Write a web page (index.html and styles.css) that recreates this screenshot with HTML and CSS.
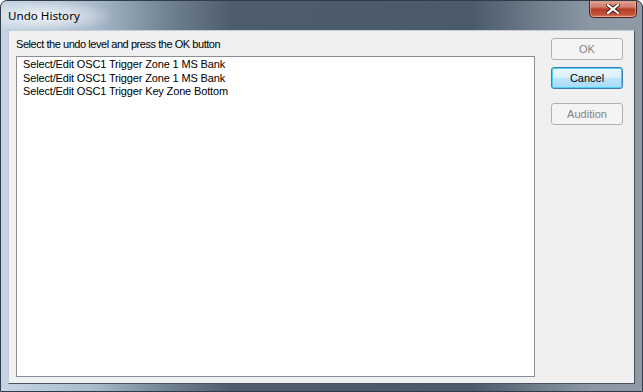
FILE: index.html
```html
<!DOCTYPE html>
<html lang="en">
<head>
    <meta charset="UTF-8">
    <meta name="viewport" content="width=device-width, initial-scale=1.0">
    <title>Undo History</title>
    <link rel="stylesheet" href="styles.css">
</head>
<body>
    <div class="window">
        <div class="titlebar">
            <span class="title">Undo History</span>
            <button class="close" title="Close">
                <svg width="14" height="10" viewBox="0 0 14 10">
                    <path d="M2 1 L12 9 M12 1 L2 9" stroke="#3b1a14" stroke-width="4" stroke-linecap="square"/>
                    <path d="M2 1 L12 9 M12 1 L2 9" stroke="#ffffff" stroke-width="2.2" stroke-linecap="square"/>
                </svg>
            </button>
        </div>
        <div class="frame">
            <div class="client">
                <div class="main">
                    <p class="prompt">Select the undo level and press the OK button</p>
                    <ul class="history">
                        <li>Select/Edit OSC1 Trigger Zone 1 MS Bank</li>
                        <li>Select/Edit OSC1 Trigger Zone 1 MS Bank</li>
                        <li>Select/Edit OSC1 Trigger Key Zone Bottom</li>
                    </ul>
                </div>
                <div class="actions">
                    <button class="btn" disabled>OK</button>
                    <button class="btn default">Cancel</button>
                    <button class="btn spaced" disabled>Audition</button>
                </div>
            </div>
        </div>
    </div>
</body>
</html>
```

FILE: styles.css
```css
body {
    margin: 0;
    font-family: "Liberation Sans", Arial, sans-serif;
    font-size: 11px;
    background: #ffffff;
}

.window {
    width: 643px;
    height: 392px;
    box-sizing: border-box;
    display: flex;
    flex-direction: column;
    border: 1px solid #303c48;
    border-radius: 7px 7px 0 0;
    background: linear-gradient(90deg, #c4d4e4 0, #aabccd 90px, #6e7f8f 170px, #4d5d6c 230px, #4a5a69 470px, #6c7a88 530px, #8b98a4 590px, #8e9aa6 643px);
    overflow: hidden;
}

.titlebar {
    height: 29px;
    display: flex;
    align-items: flex-start;
    background: radial-gradient(ellipse 70px 16px at 44px 15px, rgba(255, 255, 255, 0.85), rgba(255, 255, 255, 0) 100%);
}

.title {
    margin: 7px 0 0 7px;
    font-family: "Noto Sans", "Open Sans", sans-serif;
    font-size: 11.6px;
    line-height: 16px;
    color: #000000;
}

.close {
    margin: -1px 5px 0 auto;
    width: 48px;
    height: 18px;
    padding: 0;
    display: flex;
    align-items: center;
    justify-content: center;
    border: 1px solid #4e2018;
    border-top: none;
    border-radius: 0 0 5px 5px;
    background: linear-gradient(180deg, #e3a596 0, #d0806e 40%, #b53c24 55%, #c5533a 85%, #d8836a 100%);
    box-shadow: inset 0 0 0 1px rgba(255, 210, 200, 0.45);
}

.frame {
    flex: 1;
    display: flex;
    padding: 0 7px 7px 7px;
}

.client {
    flex: 1;
    display: flex;
    gap: 16px;
    padding: 7px 11px 6px 7px;
    background: #f0f0f0;
    border: 1px solid;
    border-color: #c3ced9 #46535f #46535f #c3ced9;
}

.main {
    flex: 1;
    display: flex;
    flex-direction: column;
}

.prompt {
    margin: 0 0 5px 0;
    line-height: 13px;
    letter-spacing: -0.45px;
    color: #000000;
}

.history {
    flex: 1;
    margin: 0;
    padding: 1px 0 0 6px;
    list-style: none;
    background: #ffffff;
    border: 1px solid #8b8f94;
    line-height: 13.5px;
    letter-spacing: -0.15px;
    color: #000000;
}

.actions {
    width: 72px;
    display: flex;
    flex-direction: column;
    gap: 7px;
}

.btn {
    height: 22px;
    padding: 0;
    font-family: "Liberation Sans", Arial, sans-serif;
    font-size: 11px;
    color: #000000;
    border: 1px solid #707070;
    border-radius: 3px;
    background: linear-gradient(180deg, #f2f2f2 0, #ebebeb 50%, #dddddd 50%, #cfcfcf 100%);
}

.btn:disabled {
    color: #838383;
    border-color: #adb2b5;
    background: #f4f4f4;
}

.btn.default {
    border-color: #3c7fb1;
    background: linear-gradient(180deg, #eaf6fd 0, #d9f0fc 50%, #bee6fd 50%, #a7d9f5 100%);
    box-shadow: inset 0 0 0 1px #48d0f7;
}

.btn.spaced {
    margin-top: 7px;
}
```
